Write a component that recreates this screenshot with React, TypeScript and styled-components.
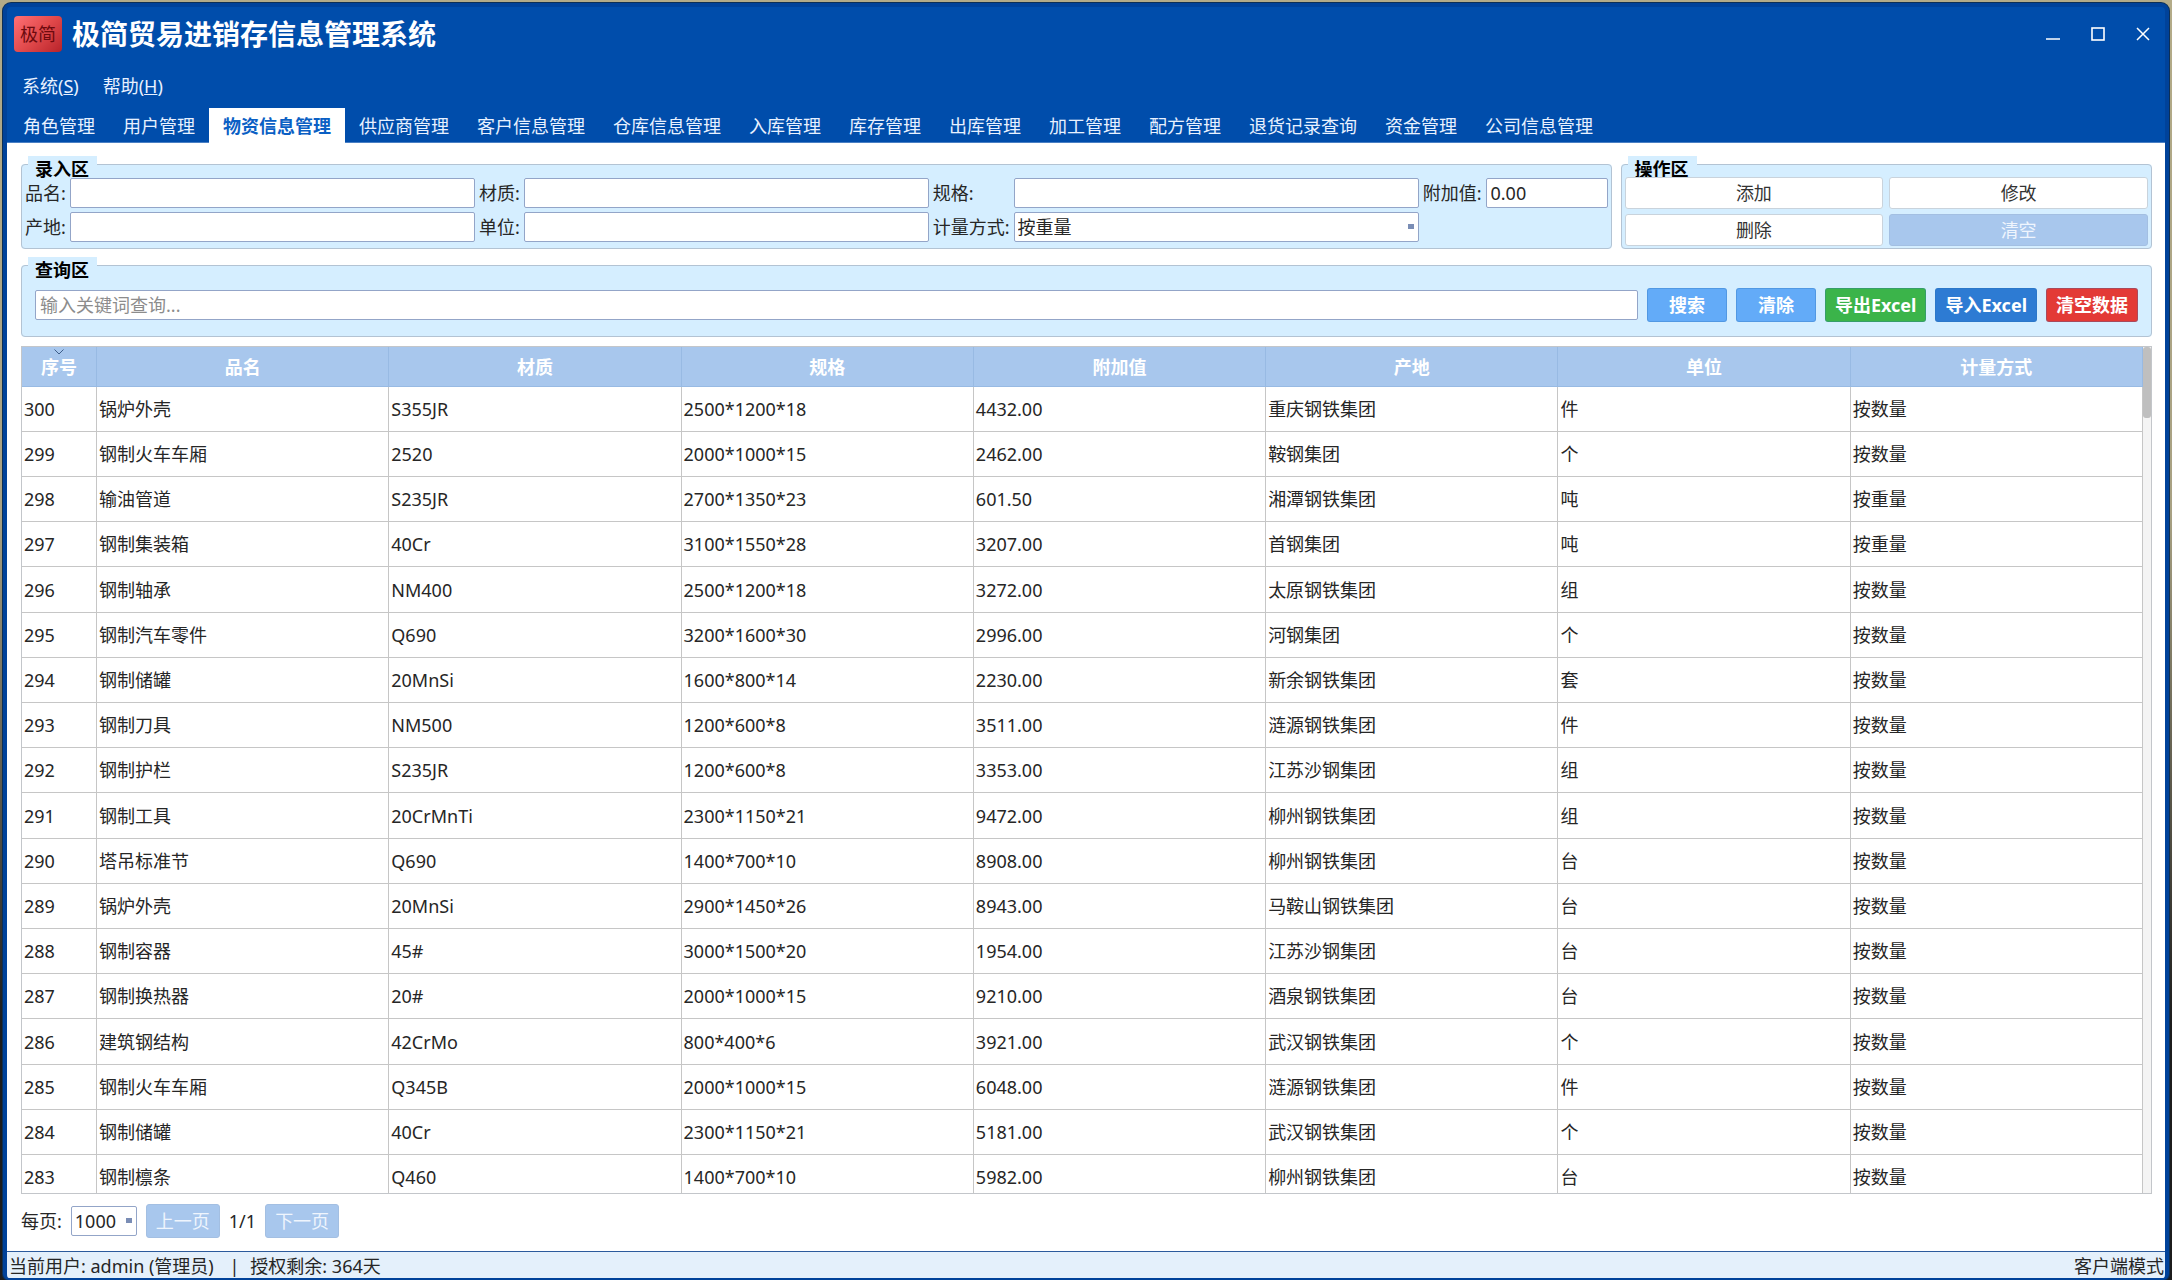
import React, { useState } from "react";
import styled, { createGlobalStyle } from "styled-components";

const GlobalStyle = createGlobalStyle`
  *, *::before, *::after { box-sizing: border-box; }
  body { margin: 0; background: #6f6f5c; }
  body, button, input, select, table {
    font-family: "Noto Sans", "Noto Sans CJK SC", sans-serif;
    font-size: 18px;
    line-height: 24px;
    color: #262626;
  }
`;

const Desktop = styled.div`
  height: 100vh;
  padding: 3px 3px 0;
  background: linear-gradient(#b3ab88, #a8a183 40%, #1c1c1c 80%);
`;

const AppWindow = styled.div`
  height: 100%;
  display: flex;
  flex-direction: column;
  border: 4px solid #00429a;
  border-bottom-width: 2px;
  border-radius: 8px 8px 6px 6px;
  box-shadow: 0 0 0 1px #0d2f55;
  background: #004dab;
  overflow: hidden;
`;

const TitleBar = styled.header`
  display: flex;
  align-items: center;
  height: 58px;
  padding: 0 0 4px 7px;
`;

const Logo = styled.span`
  display: grid;
  place-items: center;
  width: 48px;
  height: 36px;
  margin-right: 10px;
  border-radius: 4px;
  background: linear-gradient(135deg, #ff7075, #e24a4c 50%, #b8232a);
  color: #6d0a0e;
`;

const Title = styled.h1`
  flex: 1;
  margin: 0;
  font-size: 28px;
  line-height: 36px;
  font-weight: 700;
  color: #fff;
`;

const WindowButton = styled.button`
  display: grid;
  place-items: center;
  width: 45px;
  height: 36px;
  padding: 0;
  border: 0;
  background: none;
  color: #fff;
`;

const MenuBar = styled.nav`
  display: flex;
  gap: 24px;
  height: 43px;
  padding: 9px 15px 0;
`;

const MenuItem = styled.button`
  height: 24px;
  padding: 0;
  border: 0;
  background: none;
  color: #e8f1ff;
`;

const TabBar = styled.nav`
  display: flex;
  padding-left: 2px;
  border-bottom: 1px solid #4a80c4;
`;

const Tab = styled.button<{ $active: boolean }>`
  height: 35px;
  margin-bottom: -1px;
  padding: 0 14px;
  border: 0;
  background: ${(p) => (p.$active ? "#fff" : "none")};
  color: ${(p) => (p.$active ? "#0a5fc4" : "#e8f1ff")};
  font-weight: ${(p) => (p.$active ? 700 : 400)};
  white-space: nowrap;
`;

const Page = styled.main`
  flex: 1;
  min-height: 0;
  display: flex;
  flex-direction: column;
  padding: 21px 13px 0 14px;
  background: #fff;
`;

const TopPanels = styled.div`
  display: flex;
  gap: 9px;
  margin-bottom: 16px;
`;

const Panel = styled.fieldset<{ $grow?: number }>`
  position: relative;
  flex: ${(p) => (p.$grow ? `${p.$grow} 1 0` : "none")};
  min-width: 0;
  margin: 0;
  padding: 0;
  border: 1px solid #b3c3d3;
  border-radius: 4px;
  background: #d5eeff;
`;

const PanelTitle = styled.legend`
  position: absolute;
  top: -9px;
  left: 6px;
  padding: 1px 8px 0 7px;
  background: #d5eeff;
  color: #000;
  font-weight: 700;
`;

const EntryGrid = styled.div`
  position: relative;
  display: grid;
  grid-template-columns: auto 1fr auto 1fr auto 1fr auto 122px;
  gap: 4px;
  padding: 13px 3px 5px;
  align-items: center;
`;

const FieldLabel = styled.label`
  white-space: nowrap;
`;

const TextField = styled.input`
  width: 100%;
  min-width: 0;
  height: 30px;
  padding: 0 4px;
  border: 1px solid #93a5c8;
  border-radius: 2px;
  background: #fff;
  outline: none;
  &::placeholder { color: #8c8c8c; opacity: 1; }
`;

const SelectBox = styled.span<{ $width: string }>`
  position: relative;
  display: flex;
  width: ${(p) => p.$width};
  &::after {
    content: "";
    position: absolute;
    right: 5px;
    top: 12px;
    width: 6px;
    height: 5px;
    background: #7a8db5;
    pointer-events: none;
  }
`;

const Select = styled.select`
  appearance: none;
  width: 100%;
  height: 30px;
  padding: 0 3px;
  border: 1px solid #93a5c8;
  border-radius: 2px;
  background: #fff;
`;

const ActionGrid = styled.div`
  position: relative;
  display: grid;
  grid-template-columns: 1fr 1fr;
  gap: 5px 6px;
  padding: 12px 3px 2px;
`;

const ActionButton = styled.button<{ $muted?: boolean }>`
  height: 32px;
  padding: 0;
  border: 1px solid ${(p) => (p.$muted ? "#a3bfe2" : "#c9d3dc")};
  border-radius: 3px;
  background: ${(p) => (p.$muted ? "#a8c7ed" : "#fff")};
  color: ${(p) => (p.$muted ? "#eff5fd" : "#333")};
`;

const SearchRow = styled.div`
  position: relative;
  display: flex;
  align-items: center;
  gap: 9px;
  padding: 22px 13px 14px;
`;

const ToolButton = styled.button<{ $color: string }>`
  flex: none;
  height: 34px;
  min-width: 80px;
  padding: 0 9px;
  border: 1px solid rgba(40, 110, 180, 0.3);
  border-radius: 3px;
  background: ${(p) => p.$color};
  color: #fff;
  font-weight: 700;
  white-space: nowrap;
`;

const TableFrame = styled.div`
  flex: 1;
  min-height: 0;
  display: flex;
  margin-top: 9px;
  border: 1px solid #c3c6ca;
  overflow: hidden;
`;

const TableView = styled.div`
  flex: 1;
  overflow: hidden;
`;

const DataTable = styled.table`
  width: 100%;
  table-layout: fixed;
  border-collapse: separate;
  border-spacing: 0;
  th {
    position: relative;
    height: 40px;
    padding: 0;
    border-right: 1px solid #98bae3;
    border-bottom: 1px solid #98bae3;
    background: #a8c7ed;
    color: #fff;
    font-weight: 700;
  }
  th:first-child { width: 75px; }
  td {
    height: 45px;
    padding: 0 2px;
    border-right: 1px solid #c6c6c6;
    border-bottom: 1px solid #c6c6c6;
    white-space: nowrap;
  }
  tbody tr:nth-child(5n) td { height: 46px; }
`;

const SortMark = styled.svg`
  position: absolute;
  top: 2px;
  left: 50%;
  margin-left: -5px;
`;

const ScrollTrack = styled.div`
  width: 8px;
  background: #f4f4f4;
`;

const ScrollThumb = styled.div`
  height: 71px;
  border-radius: 3px;
  background: #bfbfbf;
`;

const Pager = styled.div`
  display: flex;
  align-items: center;
  gap: 9px;
  height: 57px;
  padding-bottom: 3px;
`;

const PageButton = styled.button`
  height: 34px;
  padding: 0 9px;
  border: 1px solid #a3bfe2;
  border-radius: 3px;
  background: #a8c7ed;
  color: #eff5fd;
`;

const StatusBar = styled.footer`
  display: flex;
  justify-content: space-between;
  height: 27px;
  padding: 2px 1px 0 2px;
  border-top: 1px solid #2b5a9c;
  background: #e4f0fb;
`;

const StatusGroup = styled.div`
  display: flex;
  gap: 11px;
  white-space: pre;
`;

const tabs = [
  "角色管理", "用户管理", "物资信息管理", "供应商管理", "客户信息管理", "仓库信息管理", "入库管理",
  "库存管理", "出库管理", "加工管理", "配方管理", "退货记录查询", "资金管理", "公司信息管理",
];

const columns = ["序号", "品名", "材质", "规格", "附加值", "产地", "单位", "计量方式"];

const rows = [
  ["300", "锅炉外壳", "S355JR", "2500*1200*18", "4432.00", "重庆钢铁集团", "件", "按数量"],
  ["299", "钢制火车车厢", "2520", "2000*1000*15", "2462.00", "鞍钢集团", "个", "按数量"],
  ["298", "输油管道", "S235JR", "2700*1350*23", "601.50", "湘潭钢铁集团", "吨", "按重量"],
  ["297", "钢制集装箱", "40Cr", "3100*1550*28", "3207.00", "首钢集团", "吨", "按重量"],
  ["296", "钢制轴承", "NM400", "2500*1200*18", "3272.00", "太原钢铁集团", "组", "按数量"],
  ["295", "钢制汽车零件", "Q690", "3200*1600*30", "2996.00", "河钢集团", "个", "按数量"],
  ["294", "钢制储罐", "20MnSi", "1600*800*14", "2230.00", "新余钢铁集团", "套", "按数量"],
  ["293", "钢制刀具", "NM500", "1200*600*8", "3511.00", "涟源钢铁集团", "件", "按数量"],
  ["292", "钢制护栏", "S235JR", "1200*600*8", "3353.00", "江苏沙钢集团", "组", "按数量"],
  ["291", "钢制工具", "20CrMnTi", "2300*1150*21", "9472.00", "柳州钢铁集团", "组", "按数量"],
  ["290", "塔吊标准节", "Q690", "1400*700*10", "8908.00", "柳州钢铁集团", "台", "按数量"],
  ["289", "锅炉外壳", "20MnSi", "2900*1450*26", "8943.00", "马鞍山钢铁集团", "台", "按数量"],
  ["288", "钢制容器", "45#", "3000*1500*20", "1954.00", "江苏沙钢集团", "台", "按数量"],
  ["287", "钢制换热器", "20#", "2000*1000*15", "9210.00", "酒泉钢铁集团", "台", "按数量"],
  ["286", "建筑钢结构", "42CrMo", "800*400*6", "3921.00", "武汉钢铁集团", "个", "按数量"],
  ["285", "钢制火车车厢", "Q345B", "2000*1000*15", "6048.00", "涟源钢铁集团", "件", "按数量"],
  ["284", "钢制储罐", "40Cr", "2300*1150*21", "5181.00", "武汉钢铁集团", "个", "按数量"],
  ["283", "钢制檩条", "Q460", "1400*700*10", "5982.00", "柳州钢铁集团", "台", "按数量"],
];

export default function App() {
  const [tab, setTab] = useState("物资信息管理");
  return (
    <Desktop>
      <GlobalStyle />
      <AppWindow>
        <TitleBar>
          <Logo>极简</Logo>
          <Title>极简贸易进销存信息管理系统</Title>
          <WindowButton aria-label="最小化">
            <svg width="14" height="14" viewBox="0 0 14 14" stroke="currentColor" strokeWidth="1.4">
              <path d="M0 12H14" />
            </svg>
          </WindowButton>
          <WindowButton aria-label="最大化">
            <svg width="14" height="14" viewBox="0 0 14 14" fill="none" stroke="currentColor" strokeWidth="1.6">
              <rect x="1" y="1" width="12" height="12" />
            </svg>
          </WindowButton>
          <WindowButton aria-label="关闭">
            <svg width="14" height="14" viewBox="0 0 14 14" stroke="currentColor" strokeWidth="1.5">
              <path d="M1 1L13 13M13 1L1 13" />
            </svg>
          </WindowButton>
        </TitleBar>

        <MenuBar>
          <MenuItem>系统(<u>S</u>)</MenuItem>
          <MenuItem>帮助(<u>H</u>)</MenuItem>
        </MenuBar>

        <TabBar>
          {tabs.map((t) => (
            <Tab key={t} $active={t === tab} onClick={() => setTab(t)}>{t}</Tab>
          ))}
        </TabBar>

        <Page>
          <TopPanels>
            <Panel $grow={3}>
              <PanelTitle>录入区</PanelTitle>
              <EntryGrid>
                <FieldLabel htmlFor="name">品名:</FieldLabel>
                <TextField id="name" />
                <FieldLabel htmlFor="material">材质:</FieldLabel>
                <TextField id="material" />
                <FieldLabel htmlFor="spec">规格:</FieldLabel>
                <TextField id="spec" />
                <FieldLabel htmlFor="extra">附加值:</FieldLabel>
                <TextField id="extra" defaultValue="0.00" />
                <FieldLabel htmlFor="origin">产地:</FieldLabel>
                <TextField id="origin" />
                <FieldLabel htmlFor="unit">单位:</FieldLabel>
                <TextField id="unit" />
                <FieldLabel htmlFor="measure">计量方式:</FieldLabel>
                <SelectBox $width="100%">
                  <Select id="measure" defaultValue="按重量">
                    <option>按重量</option>
                    <option>按数量</option>
                  </Select>
                </SelectBox>
              </EntryGrid>
            </Panel>
            <Panel $grow={1}>
              <PanelTitle>操作区</PanelTitle>
              <ActionGrid>
                <ActionButton>添加</ActionButton>
                <ActionButton>修改</ActionButton>
                <ActionButton>删除</ActionButton>
                <ActionButton $muted>清空</ActionButton>
              </ActionGrid>
            </Panel>
          </TopPanels>

          <Panel>
            <PanelTitle>查询区</PanelTitle>
            <SearchRow>
              <TextField aria-label="查询" placeholder="输入关键词查询..." />
              <ToolButton $color="#63abf8">搜索</ToolButton>
              <ToolButton $color="#63abf8">清除</ToolButton>
              <ToolButton $color="#3bb44a">导出Excel</ToolButton>
              <ToolButton $color="#2d7bd3">导入Excel</ToolButton>
              <ToolButton $color="#e33a36">清空数据</ToolButton>
            </SearchRow>
          </Panel>

          <TableFrame>
            <TableView>
              <DataTable>
                <thead>
                  <tr>
                    {columns.map((c, i) => (
                      <th key={c} scope="col">
                        {i === 0 && (
                          <SortMark width="10" height="6" viewBox="0 0 10 6" fill="none" stroke="#3f5f8a">
                            <path d="M0.5 0.5L5 5L9.5 0.5" />
                          </SortMark>
                        )}
                        {c}
                      </th>
                    ))}
                  </tr>
                </thead>
                <tbody>
                  {rows.map((r) => (
                    <tr key={r[0]}>
                      {r.map((cell, i) => <td key={columns[i]}>{cell}</td>)}
                    </tr>
                  ))}
                </tbody>
              </DataTable>
            </TableView>
            <ScrollTrack>
              <ScrollThumb />
            </ScrollTrack>
          </TableFrame>

          <Pager>
            <FieldLabel htmlFor="pageSize">每页:</FieldLabel>
            <SelectBox $width="66px">
              <Select id="pageSize" defaultValue="1000">
                <option>100</option>
                <option>1000</option>
              </Select>
            </SelectBox>
            <PageButton>上一页</PageButton>
            <span>1/1</span>
            <PageButton>下一页</PageButton>
          </Pager>
        </Page>

        <StatusBar>
          <StatusGroup>
            <span>当前用户: admin (管理员)</span>
            <span> |</span>
            <span>授权剩余: 364天</span>
          </StatusGroup>
          <span>客户端模式</span>
        </StatusBar>
      </AppWindow>
    </Desktop>
  );
}
